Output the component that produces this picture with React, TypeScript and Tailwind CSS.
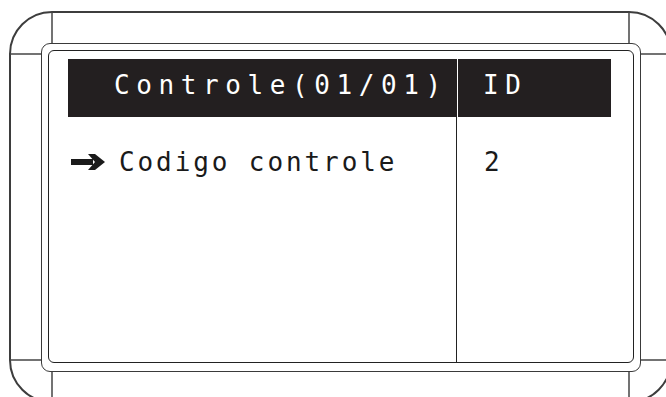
import React from "react";

const MONO = "font-['DejaVu_Sans_Mono',monospace]";

function Arrow() {
  return (
    <svg width="34" height="18" viewBox="0 0 34 18" className="shrink-0">
      <rect x="0" y="6" width="22" height="6" fill="#1a1a1a" />
      <polygon points="17,1 24,1 34,9 24,17 17,17 24,9" fill="#1a1a1a" />
    </svg>
  );
}

export default function App() {
  return (
    <div className="relative h-[397px] w-[666px] overflow-hidden bg-white">
      {/* bezel outline of the device */}
      <svg className="pointer-events-none absolute inset-0" width="666" height="397">
        <rect x="10" y="12" width="661" height="390" rx="42" fill="none" stroke="#3d3d3d" strokeWidth="2" />
        <g stroke="#444" strokeWidth="1.5">
          <line x1="52" y1="12" x2="52" y2="43" />
          <line x1="10" y1="54" x2="41" y2="54" />
          <line x1="629" y1="12" x2="629" y2="43" />
          <line x1="641" y1="54" x2="666" y2="54" />
          <line x1="10" y1="360" x2="41" y2="360" />
          <line x1="52" y1="372" x2="52" y2="397" />
          <line x1="641" y1="360" x2="666" y2="360" />
          <line x1="629" y1="372" x2="629" y2="397" />
        </g>
      </svg>

      {/* screen frame */}
      <div className="relative ml-[41px] mt-[43px] h-[329px] w-[600px] rounded-[9px] border-[1.5px] border-[#3a3a3a] bg-white pb-[8.5px] pl-[5.5px] pr-[6px] pt-[5.5px]">
        <div className="flex h-full flex-col rounded-[6px] border-[1.5px] border-[#222] pl-[19.5px] pr-[22px] pt-[8.5px]">
          {/* header */}
          <div className={`flex h-[58px] shrink-0 bg-[#231f20] text-white ${MONO} text-[26px] leading-none`}>
            <div className="flex w-[390px] items-center border-r border-white pb-[6px] pl-[46px] tracking-[6.6px]">
              Controle(01/01)
            </div>
            <div className="flex items-center pb-[6px] pl-[25px] tracking-[6.6px]">ID</div>
          </div>

          {/* rows */}
          <div className={`flex flex-1 ${MONO} text-[26px] leading-none text-[#1a1a1a]`}>
            <div className="flex w-[389px] items-start border-r-[1.5px] border-[#222] pl-[3px] pt-[32px]">
              <div className="flex items-center gap-[14px]">
                <Arrow />
                <span className="tracking-[2.9px]">Codigo controle</span>
              </div>
            </div>
            <div className="pl-[27px] pt-[32px]">2</div>
          </div>
        </div>
      </div>
    </div>
  );
}
